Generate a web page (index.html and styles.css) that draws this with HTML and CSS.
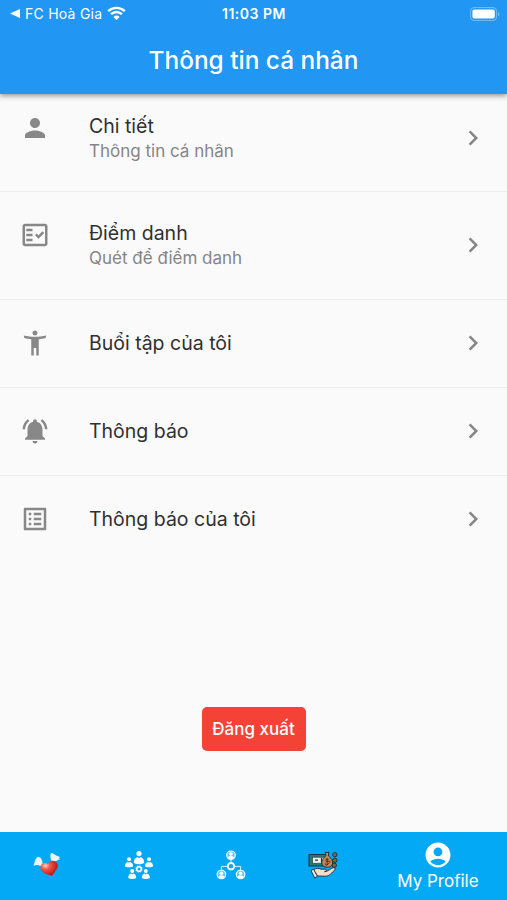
FILE: index.html
```html
<!DOCTYPE html>
<html lang="vi">

<head>
    <meta charset="UTF-8">
    <title>Thông tin cá nhân</title>
    <link rel="stylesheet" href="styles.css">
</head>

<body>
    <header class="app-bar">
        <div class="status-bar">
            <div class="status-left">
                <svg class="back-arrow" viewBox="0 0 10 9"><path d="M0 4.5L10 0v9z"/></svg>
                <span class="back-label">FC Hoà Gia</span>
                <svg class="wifi" viewBox="0 0 19 14">
                    <path d="M1.2 5.2a12 12 0 0 1 16.6 0M4.1 8.1a7.8 7.8 0 0 1 10.8 0" fill="none" stroke="#fff" stroke-width="2.4"/>
                    <path d="M9.5 14L6.4 10.9a4.5 4.5 0 0 1 6.2 0z"/>
                </svg>
            </div>
            <div class="status-time">11:03 PM</div>
            <div class="status-right">
                <svg class="battery" viewBox="0 0 30 14">
                    <rect x=".6" y=".6" width="26" height="12.8" rx="3.6" fill="none" stroke="#fff" stroke-opacity=".4"/>
                    <rect x="2.4" y="2.4" width="22.4" height="9.2" rx="2"/>
                    <path d="M28 4.8c2 .8 2 3.6 0 4.4z" fill-opacity=".4"/>
                </svg>
            </div>
        </div>
        <h1>Thông tin cá nhân</h1>
    </header>

    <main class="content">
        <ul class="menu">
            <li class="menu-item two-line first">
                <svg class="icon" viewBox="0 0 24 24"><path d="M12 12c2.21 0 4-1.79 4-4s-1.79-4-4-4-4 1.79-4 4 1.79 4 4 4zm0 2c-2.67 0-8 1.34-8 4v2h16v-2c0-2.66-5.33-4-8-4z"/></svg>
                <div class="text">
                    <div class="title">Chi tiết</div>
                    <div class="subtitle">Thông tin cá nhân</div>
                </div>
                <svg class="chevron" viewBox="0 0 24 24"><path d="M10 6L8.59 7.41 13.17 12l-4.58 4.59L10 18l6-6z"/></svg>
            </li>
            <li class="menu-item two-line">
                <svg class="icon" viewBox="0 0 24 24"><path fill-rule="evenodd" d="M20 3H4c-1.1 0-2 .9-2 2v14c0 1.1.9 2 2 2h16c1.1 0 2-.9 2-2V5c0-1.1-.9-2-2-2zm0 16H4V5h16v14z"/><path d="M19.41 10.42L17.99 9l-3.17 3.17-1.41-1.42L12 12.16 14.82 15zM5 7h5v2H5zM5 11h5v2H5zM5 15h5v2H5z"/></svg>
                <div class="text">
                    <div class="title">Điểm danh</div>
                    <div class="subtitle">Quét để điểm danh</div>
                </div>
                <svg class="chevron" viewBox="0 0 24 24"><path d="M10 6L8.59 7.41 13.17 12l-4.58 4.59L10 18l6-6z"/></svg>
            </li>
            <li class="menu-item">
                <svg class="icon" viewBox="0 0 24 24"><path d="M12 2c1.1 0 2 .9 2 2s-.9 2-2 2-2-.9-2-2 .9-2 2-2zm8.5 6c-1.86.5-4 .83-5.5 1v13h-2v-6h-2v6H9V9c-1.5-.17-3.64-.5-5.5-1L3 6c2.77.72 5.95 1 9 1s6.23-.28 9-1l-.5 2z"/></svg>
                <div class="text">
                    <div class="title">Buổi tập của tôi</div>
                </div>
                <svg class="chevron" viewBox="0 0 24 24"><path d="M10 6L8.59 7.41 13.17 12l-4.58 4.59L10 18l6-6z"/></svg>
            </li>
            <li class="menu-item">
                <svg class="icon" viewBox="0 0 24 24"><path d="M7.58 4.08L6.15 2.65C3.75 4.48 2.17 7.3 2.03 10.5h2c.15-2.65 1.51-4.97 3.55-6.42zm12.39 6.42h2c-.15-3.2-1.73-6.02-4.12-7.85l-1.42 1.43c2.02 1.45 3.39 3.77 3.54 6.42zM18 11c0-3.07-1.64-5.64-4.5-6.32V4c0-.83-.67-1.5-1.5-1.5s-1.5.67-1.5 1.5v.68C7.63 5.36 6 7.92 6 11v5l-2 2v1h16v-1l-2-2v-5zm-6 11c.14 0 .27-.01.4-.04.65-.14 1.18-.58 1.44-1.18.1-.24.15-.5.15-.78h-4c.01 1.1.9 2 2.01 2z"/></svg>
                <div class="text">
                    <div class="title">Thông báo</div>
                </div>
                <svg class="chevron" viewBox="0 0 24 24"><path d="M10 6L8.59 7.41 13.17 12l-4.58 4.59L10 18l6-6z"/></svg>
            </li>
            <li class="menu-item">
                <svg class="icon" viewBox="0 0 24 24"><path d="M19 5v14H5V5h14m1.1-2H3.9c-.5 0-.9.4-.9.9v16.2c0 .4.4.9.9.9h16.2c.4 0 .9-.5.9-.9V3.9c0-.5-.5-.9-.9-.9zM11 7h6v2h-6V7zm0 4h6v2h-6v-2zm0 4h6v2h-6zM7 7h2v2H7zm0 4h2v2H7zm0 4h2v2H7z"/></svg>
                <div class="text">
                    <div class="title">Thông báo của tôi</div>
                </div>
                <svg class="chevron" viewBox="0 0 24 24"><path d="M10 6L8.59 7.41 13.17 12l-4.58 4.59L10 18l6-6z"/></svg>
            </li>
        </ul>
        <button class="logout" type="button">Đăng xuất</button>
    </main>

    <nav class="bottom-nav">
        <a class="nav-item">
            <!-- heart with wings -->
            <svg class="nav-icon" viewBox="0 0 30 30">
                <defs>
                    <radialGradient id="heart" cx=".3" cy=".32" r=".75">
                        <stop offset="0" stop-color="#ffd0c4"/>
                        <stop offset=".35" stop-color="#ef5546"/>
                        <stop offset="1" stop-color="#b80f0f"/>
                    </radialGradient>
                </defs>
                <path d="M10.5 15C11 10 8.500 6.500 6 7C3.500 7.500 3 11 1.500 16C4 14.500 6 14.800 8.500 16z" fill="#e9f4fb"/>
                <path d="M19 10.500C18.500 6.500 17.500 3.500 20 3C22.500 4 24 6 28 7C27 7.500 27 8.500 27.800 9.500C25.500 9.500 25.500 11 23.500 11.200z" fill="#e9f4fb"/>
                <path d="M20 25.800C12.500 24 8 21.500 8.300 17.300C8.700 13 13.500 11.800 15.800 14.200C17 10.300 22.500 9.500 24.900 13C27.500 17 23.500 20.500 20 25.800z" fill="url(#heart)"/>
            </svg>
        </a>
        <a class="nav-item">
            <!-- team around a gear -->
            <svg class="nav-icon" viewBox="0 0 30 30">
                <g fill="#fff">
                    <circle cx="15" cy="3.6" r="2.6"/>
                    <path d="M9.8 13q0-5.5 4.2-5.8l1 1.300 1-1.300q4.200.3 4.200 5.800-5.200 2.500-10.400 0z"/>
                    <g id="member">
                        <circle cx="5" cy="9.3" r="2"/>
                        <path d="M1 16.400q0-4.200 3.200-4.500l.8 1 .8-1q3.200.3 3.200 4.500-4 1.800-8 0z"/>
                    </g>
                    <use href="#member" x="20"/>
                    <use href="#member" x="3.2" y="11.6"/>
                    <use href="#member" x="16.8" y="11.6"/>
                </g>
                <circle cx="15" cy="19" r="2.3" fill="none" stroke="#fff" stroke-width="1.6"/>
                <circle cx="15" cy="19" r="3.3" fill="none" stroke="#fff" stroke-width=".8" stroke-dasharray="1.3 1.3"/>
            </svg>
        </a>
        <a class="nav-item">
            <!-- people network -->
            <svg class="nav-icon" viewBox="0 0 30 30">
                <path d="M15 9v4M5.4 21v-4.600H12M24.600 21v-4.600H18" fill="none" stroke="#d9f1fd" stroke-width="1"/>
                <circle cx="15" cy="16.2" r="3.2" fill="none" stroke="#fff" stroke-width="1.9"/>
                <g id="node">
                    <circle cx="15" cy="5.3" r="4.3" fill="#5cc8f7" stroke="#fff" stroke-width="1.1"/>
                    <circle cx="15" cy="4.1" r="1.8" fill="#fff"/>
                    <path d="M11.9 8.3q.2-2.300 3.100-2.300t3.100 2.300q-3.100 2.200-6.200 0z" fill="#fff"/>
                </g>
                <use href="#node" x="-9.6" y="19.2"/>
                <use href="#node" x="9.6" y="19.2"/>
            </svg>
        </a>
        <a class="nav-item">
            <!-- hand holding money -->
            <svg class="nav-icon" viewBox="0 0 30 30">
                <g stroke="#1b2b35" stroke-width=".9">
                    <rect x="1" y="4.5" width="19" height="11.5" fill="#2c7771"/>
                    <path d="M4.500 7.300h12v6h-12z" fill="#eef3e8" stroke-width=".6"/>
                    <circle cx="26.800" cy="4.700" r="2.200" fill="#80643b"/>
                    <circle cx="26.800" cy="10.300" r="2.200" fill="#80643b"/>
                    <circle cx="26.300" cy="15.300" r="2.200" fill="#80643b"/>
                    <path d="M17.200 2l1.800.7 1.800-.7-.4 3.800c5.800 4.200 5.800 11.500-1.200 11.500s-7-7.300-1.200-11.500z" fill="#c58a55"/>
                    <path d="M5.500 19.800C8 18 10.500 18 13 19.200h4c2 .4 1.600 2.500-.5 2.500 4-.2 6.500-3.700 8.700-4 2-.1 2.300 1.400 1.200 2.500-4 4.500-6 6-9.500 6l-7.400-.2z" fill="#f9dccb"/>
                    <path d="M3 20.500l2.600-1.200 3.800 7-2.700 1.800z" fill="#dce8ed"/>
                </g>
                <path d="M7 10.200h3M13.500 8v4.500" stroke="#26343c" stroke-width="1.200"/>
                <path d="M20.800 9.300q-3.200-1-3.200 1t3 1-.3 2.500-3-.6M19.200 8v7.200" fill="none" stroke="#35231b" stroke-width=".8"/>
            </svg>
        </a>
        <a class="nav-item active">
            <svg class="profile-icon" viewBox="0 0 24 24"><path d="M12 2C6.48 2 2 6.48 2 12s4.48 10 10 10 10-4.48 10-10S17.52 2 12 2zm0 4c1.93 0 3.5 1.57 3.5 3.5S13.93 13 12 13s-3.5-1.57-3.5-3.5S10.07 6 12 6zm0 14c-2.03 0-4.43-.82-6.14-2.88C7.55 15.8 9.68 15 12 15s4.45.8 6.14 2.12C16.43 19.18 14.03 20 12 20z"/></svg>
            <span>My Profile</span>
        </a>
    </nav>
</body>

</html>
```
FILE: styles.css
```css
* {
    box-sizing: border-box;
}

body {
    margin: 0;
    height: 900px;
    display: flex;
    flex-direction: column;
    background-color: #fafafa;
    font-family: Inter, "Liberation Sans", sans-serif;
    overflow: hidden;
}

svg {
    display: block;
    flex-shrink: 0;
}

.app-bar {
    height: 94px;
    background-color: #2196f3;
    color: #fff;
    box-shadow: 0 2px 5px rgba(0, 0, 0, 0.4);
    z-index: 1;
}

.status-bar {
    height: 27px;
    display: grid;
    grid-template-columns: 1fr auto 1fr;
    align-items: center;
    padding: 0 7px 0 10px;
    fill: #fff;
    font-size: 14px;
}

.status-left {
    display: flex;
    align-items: center;
}

.back-arrow {
    width: 10px;
    height: 9px;
    margin-right: 5px;
}

.back-label {
    letter-spacing: 0.25px;
}

.wifi {
    width: 19px;
    height: 14px;
    margin-left: 5px;
    margin-top: -2px;
}

.status-time {
    font-weight: 600;
    font-size: 14px;
    letter-spacing: 0.5px;
    margin-right: 2px;
}

.status-right {
    display: flex;
    justify-content: flex-end;
}

.battery {
    width: 30px;
    height: 14px;
}

h1 {
    margin: 0;
    height: 66px;
    line-height: 66px;
    text-align: center;
    font-size: 24.4px;
    font-weight: 500;
}

.content {
    flex: 1;
    display: flex;
    flex-direction: column;
    align-items: center;
}

.menu {
    width: 100%;
    margin: 0;
    padding: 0;
    list-style: none;
}

.menu-item {
    height: 88px;
    display: flex;
    align-items: center;
    padding: 0 19px 2px 20px;
    border-bottom: 1px solid #eeeeee;
}

.menu-item:last-child {
    border-bottom: none;
}

.two-line {
    height: 108px;
}

.two-line.first {
    height: 98px;
    padding-bottom: 10px;
}

.two-line .icon {
    margin-bottom: 19px;
}

.icon {
    width: 30px;
    height: 30px;
    fill: #888888;
}

.chevron {
    width: 30px;
    height: 30px;
    fill: #858585;
}

.text {
    flex: 1;
    margin-left: 39px;
}

.title {
    font-size: 19.5px;
    line-height: 26px;
    color: #303030;
}

.two-line .title {
    line-height: 25px;
    padding-top: 2px;
}

.subtitle {
    font-size: 17px;
    line-height: 25px;
    color: #858585;
}

.logout {
    width: 104px;
    height: 44px;
    margin-top: 143px;
    padding: 0;
    border: none;
    border-radius: 5px;
    background-color: #f44336;
    color: #fff;
    font-family: inherit;
    font-size: 17px;
    font-weight: 500;
}

.bottom-nav {
    height: 68px;
    padding-bottom: 2px;
    display: flex;
    background-color: #03a9f4;
    color: #fff;
}

.nav-item {
    flex: 1;
    display: flex;
    flex-direction: column;
    align-items: center;
    justify-content: center;
}

.nav-item.active {
    flex: 1.5;
    padding-top: 2px;
    font-size: 17px;
    line-height: 22px;
}

.nav-icon {
    width: 30px;
    height: 30px;
    margin-left: 1px;
}

.profile-icon {
    width: 30px;
    height: 30px;
    fill: #fff;
}
```
